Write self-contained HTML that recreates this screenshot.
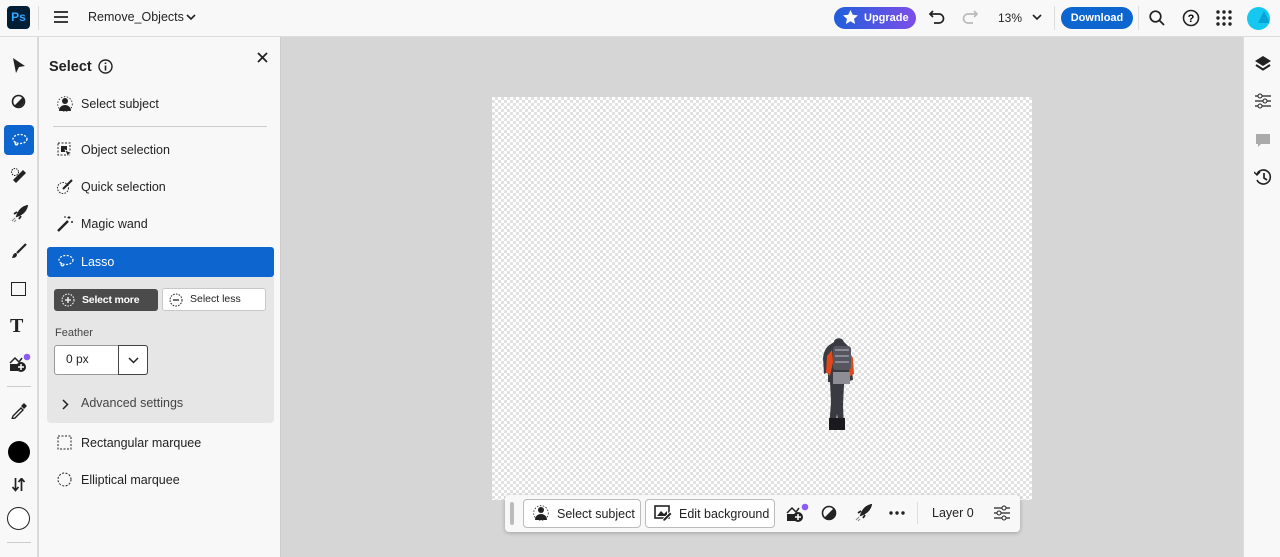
<!DOCTYPE html>
<html><head><meta charset="utf-8"><style>
*{box-sizing:border-box;margin:0;padding:0}
body{width:1280px;height:557px;overflow:hidden;font-family:"Liberation Sans",sans-serif;background:#d6d6d6;position:relative;color:#222}
.top{position:absolute;left:0;top:0;width:1280px;height:37px;background:#f8f8f8;border-bottom:1px solid #dcdcdc}
.abs{position:absolute}
.left{position:absolute;left:0;top:37px;width:38px;height:520px;background:#f8f8f8;border-right:1px solid #ddd}
.panel{position:absolute;left:39px;top:37px;width:242px;height:520px;background:#f8f8f8;border-right:1px solid #ccc}
.right{position:absolute;left:1243px;top:37px;width:37px;height:520px;background:#f8f8f8;border-left:1px solid #ddd}
.item{position:absolute;left:8px;width:227px;height:30px;font-size:12.5px;display:flex;align-items:center;padding-left:34px}
.item svg{position:absolute;left:10px;top:7px}
.canvas{position:absolute;left:492px;top:97px;width:540px;height:403px;background-color:#fff;background-image:conic-gradient(#e2e2e2 25%,#fff 0 50%,#e2e2e2 0 75%,#fff 0);background-size:6px 6px}
.btn{position:absolute;border:1px solid #bbb;border-radius:4px;background:#fff;font-size:12.5px;display:flex;align-items:center}
</style></head><body>
<div class="top">
 <div class="abs" style="left:7px;top:6px;width:23px;height:23px;background:#001e36;border-radius:4px;color:#31a8ff;font-weight:bold;font-size:12px;text-align:center;line-height:23px">Ps</div>
 <div class="abs" style="left:38px;top:6px;width:1px;height:24px;background:#ddd"></div>
 <svg class="abs" style="left:54px;top:11px" width="14" height="12"><path d="M0 1h14M0 6h14M0 11h14" stroke="#222" stroke-width="1.8"/></svg>
 <div class="abs" style="left:88px;top:10px;font-size:12.5px">Remove_Objects</div>
 <svg class="abs" style="left:186px;top:14px" width="10" height="7"><path d="M1 1l4 4 4-4" stroke="#222" stroke-width="1.6" fill="none"/></svg>
 <div class="abs" style="left:834px;top:7px;width:82px;height:22px;border-radius:11px;background:linear-gradient(90deg,#1f5fdc,#7d4ee8);color:#fff;font-weight:bold;font-size:11px;line-height:22px;padding-left:30px">Upgrade</div>
 <svg class="abs" style="left:843px;top:10px" width="15" height="15"><path d="M7.5 0l2.2 4.8 5.2.6-3.9 3.5 1.1 5.1-4.6-2.7-4.6 2.7 1.1-5.1L0 5.4l5.3-.6z" fill="#fff"/></svg>
 <svg class="abs" style="left:929px;top:10px" width="16" height="14"><path d="M4 1L1 4l3 3M1 4h9a4.5 4.5 0 010 9H5" stroke="#222" stroke-width="1.7" fill="none"/></svg>
 <svg class="abs" style="left:962px;top:10px" width="16" height="14"><path d="M12 1l3 3-3 3M15 4H6a4.5 4.5 0 000 9h5" stroke="#bbb" stroke-width="1.7" fill="none"/></svg>
 <div class="abs" style="left:998px;top:11px;font-size:12px">13%</div>
 <svg class="abs" style="left:1032px;top:14px" width="10" height="7"><path d="M1 1l4 4 4-4" stroke="#222" stroke-width="1.6" fill="none"/></svg>
 <div class="abs" style="left:1054px;top:6px;width:1px;height:24px;background:#ddd"></div>
 <div class="abs" style="left:1061px;top:7px;width:72px;height:22px;border-radius:11px;background:#0d66d0;color:#fff;font-weight:bold;font-size:11px;line-height:22px;text-align:center">Download</div>
 <div class="abs" style="left:1138px;top:6px;width:1px;height:24px;background:#ddd"></div>
 <svg class="abs" style="left:1149px;top:10px" width="16" height="16"><circle cx="6.5" cy="6.5" r="5.3" stroke="#222" stroke-width="1.7" fill="none"/><path d="M10.5 10.5l4.5 4.5" stroke="#222" stroke-width="1.8"/></svg>
 <svg class="abs" style="left:1182px;top:9px" width="18" height="18"><circle cx="9" cy="9" r="7.5" stroke="#222" stroke-width="1.6" fill="none"/><text x="9" y="13" font-size="11" font-weight="bold" text-anchor="middle" font-family="Liberation Sans">?</text></svg>
 <svg class="abs" style="left:1216px;top:10px" width="16" height="16" fill="#222"><circle cx="2" cy="2" r="1.7"/><circle cx="8" cy="2" r="1.7"/><circle cx="14" cy="2" r="1.7"/><circle cx="2" cy="8" r="1.7"/><circle cx="8" cy="8" r="1.7"/><circle cx="14" cy="8" r="1.7"/><circle cx="2" cy="14" r="1.7"/><circle cx="8" cy="14" r="1.7"/><circle cx="14" cy="14" r="1.7"/></svg>
 <div class="abs" style="left:1247px;top:7px;width:23px;height:23px;border-radius:50%;background:#14c8f0;overflow:hidden"><div style="position:absolute;left:11px;top:4px;border-left:6px solid transparent;border-right:6px solid transparent;border-bottom:12px solid #0aa0d8"></div></div>
</div>

<div class="left">
 <svg class="abs" style="left:12px;top:20px" width="14" height="17"><path d="M1 1l12 8-6 1-3 6z" fill="#222"/></svg>
 <svg class="abs" style="left:11px;top:57px" width="15" height="15"><circle cx="7.5" cy="7.5" r="6" stroke="#222" stroke-width="1.6" fill="none"/><path d="M11.7 3.3A6 6 0 013.3 11.7z" fill="#222"/></svg>
 <div class="abs" style="left:4px;top:88px;width:30px;height:30px;background:#0d66d0;border-radius:4px"></div>
 <svg class="abs" style="left:11px;top:96px" width="17" height="15"><ellipse cx="9" cy="6" rx="7" ry="4.5" stroke="#fff" stroke-width="1.3" fill="none" stroke-dasharray="2 1.5"/><path d="M5 9c-2 2 0 4 2 2" stroke="#fff" stroke-width="1.3" fill="none"/></svg>
 <svg class="abs" style="left:10px;top:130px" width="18" height="18"><path d="M3 13L13 3l3 3L6 16z" fill="#222"/><circle cx="5" cy="5" r="3.5" stroke="#222" fill="none" stroke-dasharray="1.5 1"/></svg>
 <svg class="abs" style="left:10px;top:168px" width="18" height="18"><path d="M7 11c2-6 6-9 10-10-1 4-4 8-10 10z M4 9l3-2 M9 14l2-3" stroke="#222" stroke-width="1.8" fill="#222"/><path d="M2 16l3-3M4 17l2-2" stroke="#888"/></svg>
 <svg class="abs" style="left:11px;top:206px" width="16" height="16"><path d="M15 1L6 10" stroke="#222" stroke-width="2.2"/><path d="M5 10c-3 0-3 3-4 5 3 0 5-1 5-4z" fill="#222"/></svg>
 <div class="abs" style="left:11px;top:245px;width:15px;height:14px;border:1.6px solid #222"></div>
 <div class="abs" style="left:10px;top:278px;font-family:'Liberation Serif',serif;font-size:20px;font-weight:bold">T</div>
 <svg class="abs" style="left:9px;top:316px" width="22" height="20"><path d="M1 10l5-5 4 4 3-4" stroke="#222" stroke-width="1.5" fill="none"/><rect x="1" y="11" width="8" height="7" fill="#222"/><circle cx="12" cy="14" r="5" fill="#222"/><path d="M12 11v6M9 14h6" stroke="#fff" stroke-width="1.5"/><circle cx="18" cy="4" r="3.3" fill="#8a5cf5"/></svg>
 <div class="abs" style="left:7px;top:349px;width:24px;height:1px;background:#ccc"></div>
 <svg class="abs" style="left:10px;top:364px" width="18" height="18"><path d="M3 15l8-8 2 2-8 8-3 1z" stroke="#222" stroke-width="1.4" fill="none"/><path d="M11 5l3-3 3 3-3 3z" fill="#222"/></svg>
 <div class="abs" style="left:8px;top:404px;width:22px;height:22px;border-radius:50%;background:#000"></div>
 <svg class="abs" style="left:12px;top:441px" width="13" height="14"><path d="M3.5 0v12M0.5 9l3 3.5 3-3.5M9.5 13V1M6.5 4l3-3.5 3 3.5" stroke="#222" stroke-width="1.7" fill="none"/></svg>
 <div class="abs" style="left:7px;top:470px;width:23px;height:23px;border-radius:50%;border:1.4px solid #222;background:#fff"></div>
 <div class="abs" style="left:7px;top:505px;width:24px;height:1px;background:#ccc"></div>
</div>

<div class="panel">
 <div class="abs" style="left:10px;top:22px;font-size:14.5px;font-weight:bold">Select</div>
 <svg class="abs" style="left:59px;top:22px" width="15" height="15"><circle cx="7.5" cy="7.5" r="6.5" stroke="#222" stroke-width="1.4" fill="none"/><path d="M7.5 6.5v5M7.5 3.5v1.5" stroke="#222" stroke-width="1.6"/></svg>
 <svg class="abs" style="left:218px;top:15px" width="11" height="11"><path d="M1 1l9 9M10 1l-9 9" stroke="#222" stroke-width="1.8"/></svg>
 <div class="item" style="top:52px"><svg width="16" height="16"><circle cx="8" cy="5" r="3" fill="#222"/><path d="M2 15c0-4 3-6 6-6s6 2 6 6z" fill="#222"/><circle cx="8" cy="8" r="7.3" stroke="#222" stroke-width=".8" fill="none" stroke-dasharray="1.5 1.5"/></svg>Select subject</div>
 <div class="abs" style="left:14px;top:89px;width:214px;height:1px;background:#ccc"></div>
 <div class="item" style="top:98px"><svg width="16" height="16"><rect x="1" y="1" width="12" height="12" stroke="#222" fill="none" stroke-dasharray="2 1.5"/><rect x="4" y="4" width="6" height="6" fill="#222"/><path d="M8 8l7 3-3 1-1 3z" fill="#222" stroke="#fff" stroke-width=".7"/></svg>Object selection</div>
 <div class="item" style="top:135px"><svg width="16" height="16"><circle cx="6" cy="9" r="5.5" stroke="#222" fill="none" stroke-dasharray="1.5 1.3"/><path d="M15 1L6 10" stroke="#222" stroke-width="2"/></svg>Quick selection</div>
 <div class="item" style="top:172px"><svg width="16" height="16"><path d="M1 15L11 5" stroke="#222" stroke-width="2.4"/><path d="M12 0v3M10.5 1.5h3M15 5v2M14 6h2M8 0v2" stroke="#222"/></svg>Magic wand</div>
 <div class="item" style="top:210px;left:8px;background:#0d66d0;color:#fff;border-radius:3px"><svg width="17" height="15"><ellipse cx="9" cy="6" rx="7" ry="4.5" stroke="#fff" stroke-width="1.2" fill="none" stroke-dasharray="2 1.5"/><path d="M5 9c-2 2 0 4 2 2" stroke="#fff" stroke-width="1.2" fill="none"/></svg>Lasso</div>
 <div class="abs" style="left:8px;top:240px;width:227px;height:146px;background:#e6e6e6;border-radius:0 0 4px 4px"></div>
 <div class="abs" style="left:15px;top:252px;width:104px;height:22px;background:#4b4b4b;border-radius:3px;color:#fff;font-size:10.5px;font-weight:bold;line-height:22px;padding-left:28px;letter-spacing:-.2px">Select more</div>
 <svg class="abs" style="left:22px;top:256px" width="14" height="14"><circle cx="7" cy="7" r="6" stroke="#fff" fill="none" stroke-dasharray="1.6 1.2"/><path d="M7 4v6M4 7h6" stroke="#fff" stroke-width="1.3"/></svg>
 <div class="abs" style="left:123px;top:251px;width:104px;height:23px;background:#fff;border:1px solid #c8c8c8;border-radius:3px;font-size:10.5px;line-height:21px;padding-left:27px">Select less</div>
 <svg class="abs" style="left:130px;top:256px" width="14" height="14"><circle cx="7" cy="7" r="6" stroke="#222" fill="none" stroke-dasharray="1.6 1.2"/><path d="M4 7h6" stroke="#222" stroke-width="1.3"/></svg>
 <div class="abs" style="left:16px;top:290px;font-size:11px;color:#444">Feather</div>
 <div class="abs" style="left:15px;top:308px;width:94px;height:30px;background:#fff;border:1px solid #999;border-radius:3px"></div>
 <div class="abs" style="left:79px;top:308px;width:30px;height:30px;border:1px solid #444;border-radius:0 3px 3px 0;background:#fff"></div>
 <div class="abs" style="left:27px;top:315px;font-size:12px">0 px</div>
 <svg class="abs" style="left:89px;top:320px" width="11" height="7"><path d="M1 1l4.5 4.5L10 1" stroke="#222" stroke-width="1.5" fill="none"/></svg>
 <svg class="abs" style="left:23px;top:362px" width="7" height="11"><path d="M1 1l4.5 4.5L1 10" stroke="#222" stroke-width="1.5" fill="none"/></svg>
 <div class="abs" style="left:42px;top:359px;font-size:12.5px;color:#444">Advanced settings</div>
 <div class="item" style="top:391px"><svg width="15" height="15"><rect x="1" y="1" width="13" height="13" stroke="#222" fill="none" stroke-dasharray="2 1.5"/></svg>Rectangular marquee</div>
 <div class="item" style="top:428px"><svg width="15" height="15"><circle cx="7.5" cy="7.5" r="6.5" stroke="#222" fill="none" stroke-dasharray="2 1.5"/></svg>Elliptical marquee</div>
</div>

<div class="canvas"></div>
<svg class="abs" style="left:818px;top:334px" width="44" height="100">
 <path d="M16 8c0-4 8-6 10 0l4 4c2 4 3 10 3 16l2 18-4 1-1-8-2 6-2 6-1 20 1 23h-5l-2-14-2 14h-6l2-26-1-20-2 0 0-10-4 2-1-16c1-8 4-12 8-14z" fill="#3a3a42"/>
 <path d="M14 16l-5 6-1 16 4 4 3-14z" fill="#e0481c"/>
 <path d="M30 16l5 8 1 16-4 2-2-12z" fill="#e0481c"/>
 <rect x="15" y="12" width="18" height="24" rx="3" fill="#55565e"/>
 <path d="M17 16h14M17 22h14M17 28h14" stroke="#9a9aa6" stroke-width="1.5"/>
 <rect x="15" y="38" width="17" height="12" fill="#8e8c94"/>
 <rect x="11" y="84" width="16" height="12" fill="#1a1a1e"/>
</svg>

<div class="abs" style="left:505px;top:495px;width:515px;height:37px;background:#f8f8f8;border-radius:4px;box-shadow:0 1px 4px rgba(0,0,0,.25)"></div>
<div class="abs" style="left:510px;top:502px;width:4px;height:23px;background:#bbb;border-radius:2px"></div>
<div class="btn" style="left:523px;top:499px;width:118px;height:29px;padding-left:33px">Select subject</div>
<svg class="abs" style="left:533px;top:505px" width="16" height="16"><circle cx="8" cy="5" r="3" fill="#222"/><path d="M2 15c0-4 3-6 6-6s6 2 6 6z" fill="#222"/><circle cx="8" cy="8" r="7.3" stroke="#222" stroke-width=".8" fill="none" stroke-dasharray="1.5 1.5"/></svg>
<div class="btn" style="left:645px;top:499px;width:130px;height:29px;padding-left:33px">Edit background</div>
<svg class="abs" style="left:654px;top:505px" width="18" height="16"><rect x="1" y="1" width="14" height="12" stroke="#222" stroke-width="1.6" fill="none"/><path d="M3 11l4-5 3 3 3-3v5z" fill="#222"/><path d="M9 14l7-7 2 2-7 7h-2z" fill="#222" stroke="#fff" stroke-width=".8"/></svg>
<svg class="abs" style="left:786px;top:502px" width="24" height="21"><path d="M1 11l5-5 4 4 3-4" stroke="#222" stroke-width="1.5" fill="none"/><rect x="1" y="12" width="8" height="7" fill="#222"/><circle cx="12" cy="15" r="5" fill="#222"/><path d="M12 12v6M9 15h6" stroke="#fff" stroke-width="1.5"/><circle cx="19" cy="5" r="3.3" fill="#8a5cf5"/></svg>
<svg class="abs" style="left:821px;top:505px" width="16" height="16"><circle cx="8" cy="8" r="6.5" stroke="#222" stroke-width="1.6" fill="none"/><path d="M12.6 3.4A6.5 6.5 0 013.4 12.6z" fill="#222"/></svg>
<svg class="abs" style="left:854px;top:504px" width="18" height="18"><path d="M7 11c2-6 6-9 10-10-1 4-4 8-10 10z M4 9l3-2 M9 14l2-3" stroke="#222" stroke-width="1.8" fill="#222"/><path d="M2 16l3-3M4 17l2-2" stroke="#888"/></svg>
<svg class="abs" style="left:889px;top:511px" width="16" height="4" fill="#222"><circle cx="2" cy="2" r="1.7"/><circle cx="8" cy="2" r="1.7"/><circle cx="14" cy="2" r="1.7"/></svg>
<div class="abs" style="left:917px;top:502px;width:1px;height:22px;background:#ddd"></div>
<div class="abs" style="left:932px;top:506px;font-size:12.5px">Layer 0</div>
<svg class="abs" style="left:993px;top:505px" width="17" height="16"><path d="M1 3h16M1 8h16M1 13h16" stroke="#222" stroke-width="1.2"/><circle cx="11" cy="3" r="2" fill="#f8f8f8" stroke="#222"/><circle cx="6" cy="8" r="2" fill="#f8f8f8" stroke="#222"/><circle cx="11" cy="13" r="2" fill="#f8f8f8" stroke="#222"/></svg>

<div class="right">
 <svg class="abs" style="left:10px;top:18px" width="18" height="18"><path d="M9 1l8 5-8 5-8-5z" fill="#222"/><path d="M2 10l7 4.5 7-4.5" stroke="#222" stroke-width="2" fill="none"/></svg>
 <svg class="abs" style="left:10px;top:56px" width="17" height="16"><path d="M1 3h16M1 8h16M1 13h16" stroke="#222" stroke-width="1.2"/><circle cx="6" cy="3" r="2" fill="#f8f8f8" stroke="#222"/><circle cx="11" cy="8" r="2" fill="#f8f8f8" stroke="#222"/><circle cx="6" cy="13" r="2" fill="#f8f8f8" stroke="#222"/></svg>
 <svg class="abs" style="left:11px;top:96px" width="16" height="15"><path d="M1 1h14v10H6l-3 3v-3H1z" fill="#aaa"/></svg>
 <svg class="abs" style="left:10px;top:131px" width="18" height="18"><path d="M3 6A7 7 0 1 1 3 12" stroke="#222" stroke-width="1.6" fill="none"/><path d="M0 4l3 3 3-3" stroke="#222" stroke-width="1.4" fill="none"/><path d="M10 5v5l3 2" stroke="#222" stroke-width="1.7" fill="none"/></svg>
</div>
</body></html>
